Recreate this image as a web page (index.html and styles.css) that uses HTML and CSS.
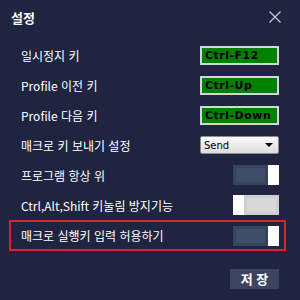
FILE: index.html
```html
<!DOCTYPE html>
<html lang="ko">
<head>
    <meta charset="UTF-8">
    <title>설정</title>
    <link rel="stylesheet" href="styles.css">
</head>
<body>
    <div class="dialog">
        <div class="dialog-header">
            <span class="dialog-title">설정</span>
            <svg class="close-icon" width="12" height="12" viewBox="0 0 12 12">
                <path d="M0.5 0.5 L11.5 11.5 M11.5 0.5 L0.5 11.5" stroke="#c9cbd6" stroke-width="1.2" fill="none"/>
            </svg>
        </div>

        <div class="settings">
            <div class="row">
                <span class="label">일시정지 키</span>
                <span class="key-box">Ctrl-F12</span>
            </div>
            <div class="row">
                <span class="label">Profile 이전 키</span>
                <span class="key-box">Ctrl-Up</span>
            </div>
            <div class="row">
                <span class="label">Profile 다음 키</span>
                <span class="key-box">Ctrl-Down</span>
            </div>
            <div class="row">
                <span class="label">매크로 키 보내기 설정</span>
                <div class="select">
                    <span>Send</span>
                    <span class="select-arrow"></span>
                </div>
            </div>
            <div class="row">
                <span class="label">프로그램 항상 위</span>
                <span class="toggle on"><span class="knob"></span></span>
            </div>
            <div class="row">
                <span class="label">Ctrl,Alt,Shift 키눌림 방지기능</span>
                <span class="toggle off"><span class="knob"></span></span>
            </div>
            <div class="row highlight">
                <span class="label">매크로 실행키 입력 허용하기</span>
                <span class="toggle on"><span class="knob"></span></span>
            </div>
        </div>

        <div class="dialog-footer">
            <button class="save-btn">저 장</button>
        </div>
    </div>
</body>
</html>
```

FILE: styles.css
```css
body {
    margin: 0;
    background-color: #1f2540;
    font-family: "Noto Sans CJK KR", "Noto Sans", sans-serif;
    color: #ffffff;
}

.dialog {
    width: 300px;
    height: 300px;
    box-sizing: border-box;
}

.dialog-header {
    height: 34px;
    display: flex;
    align-items: center;
    justify-content: space-between;
    padding: 0 19px 0 11px;
}

.dialog-title {
    font-size: 13px;
    font-weight: bold;
}

.close-icon {
    display: block;
}

.settings {
    padding-top: 6px;
}

.row {
    height: 30px;
    display: flex;
    align-items: center;
    justify-content: space-between;
    padding: 0 21px;
    box-sizing: border-box;
}

.label {
    font-size: 12px;
    white-space: nowrap;
}

.key-box {
    width: 79px;
    height: 19px;
    box-sizing: border-box;
    border: 2px solid #d4d5dc;
    background-color: #008000;
    color: #000000;
    font-family: "DejaVu Sans", sans-serif;
    font-weight: bold;
    font-size: 11px;
    letter-spacing: 0.5px;
    line-height: 15px;
    padding-left: 3px;
}

.select {
    width: 79px;
    height: 18px;
    box-sizing: border-box;
    border: 1px solid #8c8c8c;
    border-radius: 2px;
    background: linear-gradient(#fbfbfb, #dcdcdc);
    color: #000000;
    font-family: "DejaVu Sans", sans-serif;
    font-size: 10px;
    display: flex;
    align-items: center;
    justify-content: space-between;
    padding: 0 5px 0 3px;
}

.select-arrow {
    width: 0;
    height: 0;
    border-left: 4px solid transparent;
    border-right: 4px solid transparent;
    border-top: 4px solid #000000;
}

.toggle {
    width: 46px;
    height: 20px;
    box-sizing: border-box;
    display: flex;
}

.toggle.on {
    background-color: #34445c;
    border: 3px solid #34445c;
    border-right: none;
    justify-content: flex-end;
}

.toggle.on::before,
.toggle.off::after {
    content: "";
    flex: 1;
}

.toggle.on::before {
    background-color: #3d4e68;
    margin-right: 3px;
}

.toggle.off {
    background-color: #cecece;
    border: 3px solid #cecece;
    border-left: none;
}

.toggle.off::after {
    background-color: #d8d8d8;
    margin-left: 3px;
}

.toggle .knob {
    width: 11px;
    background-color: #ffffff;
    margin: -3px 0;
}

.row.highlight {
    margin: 0 14px 0 9px;
    border: 2px solid #e0202a;
    padding: 0 5px 0 10px;
    height: 31px;
}

.dialog-footer {
    display: flex;
    justify-content: flex-end;
    padding: 18px 21px 0 0;
}

.save-btn {
    width: 49px;
    height: 20px;
    border: none;
    background-color: #3d4460;
    color: #ffffff;
    font-family: "Noto Sans CJK KR", sans-serif;
    font-weight: bold;
    font-size: 13px;
    padding: 0;
    line-height: 20px;
}
```
